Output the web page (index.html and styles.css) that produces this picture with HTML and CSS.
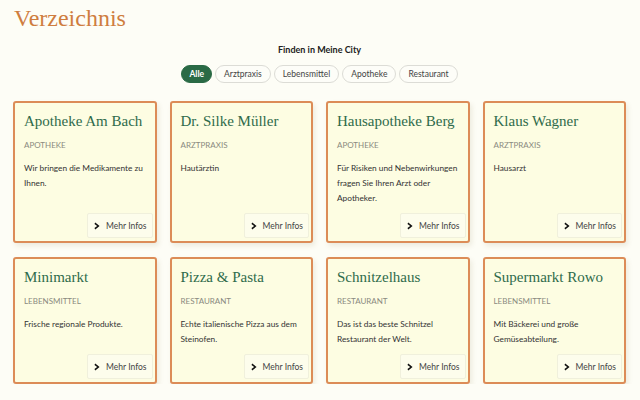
FILE: index.html
```html
<!DOCTYPE html>
<html lang="de">
<head>
<meta charset="utf-8">
<title>Verzeichnis</title>
<link rel="stylesheet" href="styles.css">
</head>
<body>
<header class="page-head">
  <h1 class="page-title">Verzeichnis</h1>
</header>
<main class="directory">
  <p class="subtitle">Finden in Meine City</p>
  <nav class="filters">
    <button class="pill active">Alle</button>
    <button class="pill">Arztpraxis</button>
    <button class="pill">Lebensmittel</button>
    <button class="pill">Apotheke</button>
    <button class="pill">Restaurant</button>
  </nav>
  <section class="grid">
    <article class="card">
      <h2 class="card-title">Apotheke Am Bach</h2>
      <div class="card-cat">Apotheke</div>
      <p class="card-text">Wir bringen die Medikamente zu Ihnen.</p>
      <div class="card-foot"><a class="more"><svg class="chev" viewBox="0 0 8 10"><path d="M1.2 0.6 L6.6 5 L1.2 9.4 L0.2 7.6 L3.6 5 L0.2 2.4 Z"/></svg>Mehr Infos</a></div>
    </article>
    <article class="card">
      <h2 class="card-title">Dr. Silke Müller</h2>
      <div class="card-cat">Arztpraxis</div>
      <p class="card-text">Hautärztin</p>
      <div class="card-foot"><a class="more"><svg class="chev" viewBox="0 0 8 10"><path d="M1.2 0.6 L6.6 5 L1.2 9.4 L0.2 7.6 L3.6 5 L0.2 2.4 Z"/></svg>Mehr Infos</a></div>
    </article>
    <article class="card">
      <h2 class="card-title">Hausapotheke Berg</h2>
      <div class="card-cat">Apotheke</div>
      <p class="card-text">Für Risiken und Nebenwirkungen fragen Sie Ihren Arzt oder Apotheker.</p>
      <div class="card-foot"><a class="more"><svg class="chev" viewBox="0 0 8 10"><path d="M1.2 0.6 L6.6 5 L1.2 9.4 L0.2 7.6 L3.6 5 L0.2 2.4 Z"/></svg>Mehr Infos</a></div>
    </article>
    <article class="card">
      <h2 class="card-title">Klaus Wagner</h2>
      <div class="card-cat">Arztpraxis</div>
      <p class="card-text">Hausarzt</p>
      <div class="card-foot"><a class="more"><svg class="chev" viewBox="0 0 8 10"><path d="M1.2 0.6 L6.6 5 L1.2 9.4 L0.2 7.6 L3.6 5 L0.2 2.4 Z"/></svg>Mehr Infos</a></div>
    </article>
    <article class="card">
      <h2 class="card-title">Minimarkt</h2>
      <div class="card-cat">Lebensmittel</div>
      <p class="card-text">Frische regionale Produkte.</p>
      <div class="card-foot"><a class="more"><svg class="chev" viewBox="0 0 8 10"><path d="M1.2 0.6 L6.6 5 L1.2 9.4 L0.2 7.6 L3.6 5 L0.2 2.4 Z"/></svg>Mehr Infos</a></div>
    </article>
    <article class="card">
      <h2 class="card-title">Pizza &amp; Pasta</h2>
      <div class="card-cat">Restaurant</div>
      <p class="card-text">Echte italienische Pizza aus dem Steinofen.</p>
      <div class="card-foot"><a class="more"><svg class="chev" viewBox="0 0 8 10"><path d="M1.2 0.6 L6.6 5 L1.2 9.4 L0.2 7.6 L3.6 5 L0.2 2.4 Z"/></svg>Mehr Infos</a></div>
    </article>
    <article class="card">
      <h2 class="card-title">Schnitzelhaus</h2>
      <div class="card-cat">Restaurant</div>
      <p class="card-text">Das ist das beste Schnitzel Restaurant der Welt.</p>
      <div class="card-foot"><a class="more"><svg class="chev" viewBox="0 0 8 10"><path d="M1.2 0.6 L6.6 5 L1.2 9.4 L0.2 7.6 L3.6 5 L0.2 2.4 Z"/></svg>Mehr Infos</a></div>
    </article>
    <article class="card">
      <h2 class="card-title">Supermarkt Rowo</h2>
      <div class="card-cat">Lebensmittel</div>
      <p class="card-text">Mit Bäckerei und große Gemüseabteilung.</p>
      <div class="card-foot"><a class="more"><svg class="chev" viewBox="0 0 8 10"><path d="M1.2 0.6 L6.6 5 L1.2 9.4 L0.2 7.6 L3.6 5 L0.2 2.4 Z"/></svg>Mehr Infos</a></div>
    </article>
  </section>
</main>
</body>
</html>
```

FILE: styles.css
```css
* { box-sizing: border-box; }

html, body {
  margin: 0;
  padding: 0;
  background: #fdfdf6;
  font-family: Lato, "Liberation Sans", sans-serif;
  color: #333;
}

.page-head {
  padding: 3px 14px 0;
}

.page-title {
  margin: 0;
  font-family: "Liberation Serif", serif;
  font-weight: normal;
  font-size: 24px;
  line-height: 30px;
  color: #cf7d3f;
}

.directory {
  padding: 0 14px 0 13px;
}

.subtitle {
  margin: 11px 0 0;
  text-align: center;
  font-size: 9px;
  font-weight: bold;
  line-height: 12px;
  color: #222;
}

.filters {
  margin-top: 9px;
  display: flex;
  justify-content: center;
  gap: 3px;
}

.pill {
  height: 18px;
  padding: 0 8px;
  border: 1px solid #dcdcd6;
  border-radius: 9px;
  background: #fdfdf8;
  font-family: Lato, "Liberation Sans", sans-serif;
  font-size: 8.5px;
  color: #444;
  line-height: 16px;
}

.pill.active {
  background: #2a6a45;
  border-color: #2a6a45;
  color: #fff;
  font-weight: bold;
  padding: 0 7px;
}

.grid {
  margin-top: 18px;
  display: grid;
  grid-template-columns: repeat(4, 1fr);
  column-gap: 13px;
  row-gap: 14px;
}

.card {
  display: flex;
  flex-direction: column;
  background: #fdfde2;
  border: 2px solid #dc8c57;
  border-radius: 3px;
  padding: 8px 2px 3px 9px;
  box-shadow: 2px 3px 5px rgba(120, 110, 60, 0.12);
}

.card-title {
  margin: 0;
  font-family: "Liberation Serif", serif;
  font-weight: normal;
  font-size: 15px;
  line-height: 20px;
  color: #2f6b4b;
  white-space: nowrap;
}

.card-cat {
  margin-top: 8px;
  font-size: 8px;
  line-height: 12px;
  text-transform: uppercase;
  color: #8a8a80;
}

.card-text {
  margin: 10px 0 0 0;
  font-size: 8.3px;
  line-height: 15px;
  color: #333;
}

.card-foot {
  margin-top: auto;
  padding-top: 7px;
  display: flex;
  justify-content: flex-end;
}

.more {
  display: flex;
  align-items: center;
  gap: 5px;
  height: 25px;
  padding: 0 5px 0 6px;
  border: 1px solid #f0f0dc;
  border-radius: 2px;
  background: #fdfdec;
  font-size: 8.5px;
  color: #444;
}

.chev {
  width: 7px;
  height: 8px;
  fill: #111;
}
```
